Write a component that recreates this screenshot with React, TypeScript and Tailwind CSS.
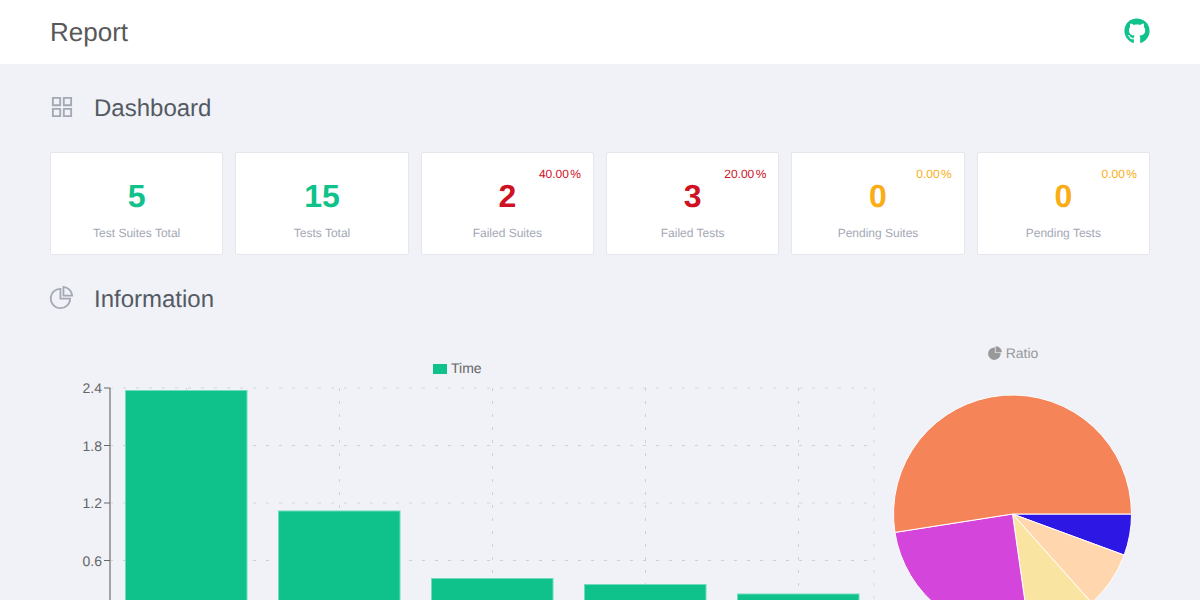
import { AiOutlineAppstore, AiOutlinePieChart, AiFillPieChart } from "react-icons/ai";
import { FaGithub } from "react-icons/fa";

const cards = [
  { value: "5", label: "Test Suites Total", color: "text-[#0fc18b]" },
  { value: "15", label: "Tests Total", color: "text-[#0fc18b]" },
  { value: "2", label: "Failed Suites", color: "text-[#cf1124]", pct: "40.00" },
  { value: "3", label: "Failed Tests", color: "text-[#cf1124]", pct: "20.00" },
  { value: "0", label: "Pending Suites", color: "text-[#faad14]", pct: "0.00" },
  { value: "0", label: "Pending Tests", color: "text-[#faad14]", pct: "0.00" },
];

const bars = [
  { x: 125.5, y: 390.5 },
  { x: 278.5, y: 511 },
  { x: 431.5, y: 578.5 },
  { x: 584.5, y: 584.5 },
  { x: 737.5, y: 594 },
];

const hLines = [388, 445.5, 503, 560.5];
const vLines = [186.5, 339.5, 492.5, 645.5, 798.5, 874];
const ticks = [
  { y: 388, t: "2.4" },
  { y: 445.5, t: "1.8" },
  { y: 503, t: "1.2" },
  { y: 560.5, t: "0.6" },
];

function slice(a0: number, a1: number, r = 119) {
  const rad = (d: number) => (d * Math.PI) / 180;
  const x0 = r * Math.cos(rad(a0));
  const y0 = r * Math.sin(rad(a0));
  const x1 = r * Math.cos(rad(a1));
  const y1 = r * Math.sin(rad(a1));
  const large = a1 - a0 > 180 ? 1 : 0;
  return `M0 0L${x0} ${y0}A${r} ${r} 0 ${large} 1 ${x1} ${y1}Z`;
}

const slices = [
  { a0: 0, a1: 20.2, fill: "#2c17e4" },
  { a0: 20.2, a1: 48.3, fill: "#ffd6ad" },
  { a0: 48.3, a1: 81.9, fill: "#f9e5a1" },
  { a0: 81.9, a1: 171.1, fill: "#d445db" },
  { a0: 171.1, a1: 360, fill: "#f68459" },
];

function Heading({ icon, text }: { icon: React.ReactNode; text: string }) {
  return (
    <div className="flex items-center h-10">
      <span className="w-[44px] flex items-center text-[#a3a8b4]">{icon}</span>
      <span className="text-[24px] leading-10 pt-[2px] text-[#545a63]">{text}</span>
    </div>
  );
}

export default function App() {
  return (
    <div className="h-screen overflow-hidden bg-[#f0f2f7] font-['Liberation_Sans',Arial,sans-serif] antialiased [text-rendering:geometricPrecision]">
      <header className="h-16 bg-white px-[50px] flex items-center justify-between">
        <span className="text-[26px] text-[#595959]">Report</span>
        <FaGithub className="text-[#0fc18b] -mt-[2px]" size={26} />
      </header>
      <main className="px-[50px] pt-6">
        <Heading icon={<AiOutlineAppstore size={28} className="-ml-[2px] -mt-[2px]" />} text="Dashboard" />
        <div className="grid grid-cols-6 gap-3 mt-6">
          {cards.map((c, i) => (
            <div
              key={i}
              className="relative h-[103px] bg-white border border-[#e5e7ec] rounded-[2px] flex flex-col items-center"
            >
              {c.pct && (
                <span className={`absolute right-3 top-[13px] text-[12px] leading-4 ${c.color}`}>
                  {c.pct}
                  <span className="ml-[1.4px]">%</span>
                </span>
              )}
              <span className={`mt-[24px] text-[32px] leading-[38px] font-bold ${c.color}`}>{c.value}</span>
              <span className="mt-[10px] text-[12px] leading-4 text-[#a3a8b4]">{c.label}</span>
            </div>
          ))}
        </div>
        <div className="mt-6">
          <Heading icon={<AiOutlinePieChart size={27} className="-ml-[2px] -mt-[3px]" />} text="Information" />
        </div>
        <div className="flex mt-4">
          <svg className="w-[825px] h-[300px] shrink-0 overflow-visible" viewBox="50 335 825 300">
            <rect x="433" y="364" width="14" height="10" fill="#0fc18b" />
            <text x="451" y="373" fontSize="14" fill="#666">Time</text>
            {hLines.map((y, i) => (
              <line key={i} x1="110" x2="874" y1={y} y2={y} stroke="#d0d0d0" strokeDasharray="3 10" opacity={Number.isInteger(y) ? 0.8 : 1} />
            ))}
            {vLines.map((x, i) => (
              <line key={i} x1={x} x2={x} y1="388" y2="620" stroke="#d0d0d0" strokeDasharray="3 10" opacity={Number.isInteger(x) ? 0.7 : 1} />
            ))}
            <line x1="110" x2="110" y1="388" y2="620" stroke="#a3a3a3" strokeWidth="2" />
            {ticks.map((t) => (
              <g key={t.t}>
                <line x1="104" x2="110" y1={t.y} y2={t.y} stroke="#666" />
                <text x="102" y={t.y + 5} fontSize="14" fill="#666" textAnchor="end">{t.t}</text>
              </g>
            ))}
            {bars.map((b, i) => (
              <rect key={i} x={b.x} y={b.y} width="121.5" height={640 - b.y} fill="#0fc18b" stroke="#6fdcbc" strokeWidth="1" />
            ))}
          </svg>
          <div className="w-[275px] shrink-0 flex flex-col items-center">
            <div className="mt-[10px] h-4 flex items-center gap-[3px] text-[14px] leading-4 text-[#999]">
              <AiFillPieChart size={16} />
              <span>Ratio</span>
            </div>
            <svg className="mt-[25px] w-[275px] h-[256px] shrink-0" viewBox="-137.5 -128 275 256">
              {slices.map((s, i) => (
                <path key={i} d={slice(s.a0, s.a1)} fill={s.fill} stroke="#fff" strokeWidth="1" />
              ))}
            </svg>
          </div>
        </div>
      </main>
    </div>
  );
}
